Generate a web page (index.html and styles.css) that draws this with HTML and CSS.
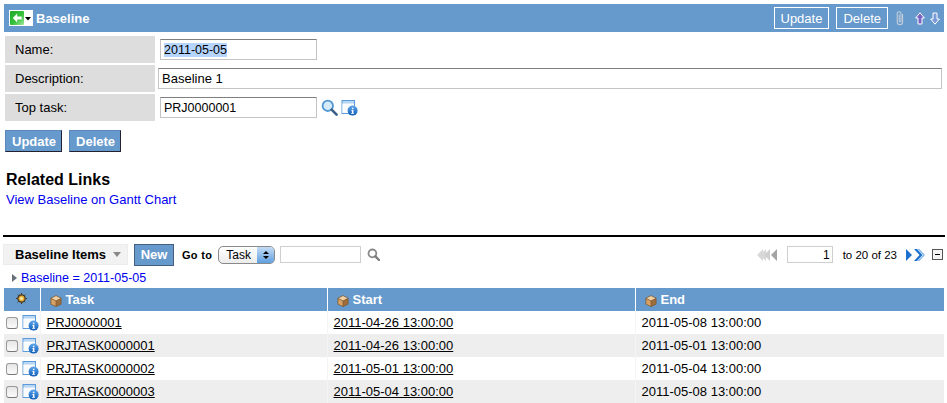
FILE: index.html
```html
<!DOCTYPE html>
<html lang="en">
<head>
  <meta charset="UTF-8">
  <title>Baseline</title>
  <link rel="stylesheet" href="styles.css">
</head>
<body>

<svg class="defs" width="0" height="0">
  <defs>
    <linearGradient id="infoBlue" x1="0" y1="0" x2="0" y2="1">
      <stop offset="0" stop-color="#5fa6ea"/>
      <stop offset="1" stop-color="#0f5cb8"/>
    </linearGradient>
    <linearGradient id="backGreen" x1="0" y1="0" x2="1" y2="1">
      <stop offset="0" stop-color="#1fa52a"/>
      <stop offset="0.55" stop-color="#35c23c"/>
      <stop offset="1" stop-color="#a5e8a0"/>
    </linearGradient>
    <symbol id="info" viewBox="0 0 17 17">
      <path d="M0.500 1h13.500v7h-1v-3.500h-11.500v9.500h6.500v1h-7.500z" fill="#5b9bdc"/>
      <path d="M1.500 2h11.500v2.500h-11.500z" fill="#b9d6f2"/>
      <rect x="1.500" y="4.500" width="11.500" height="9.500" fill="#fafcfe"/>
      <circle cx="11.600" cy="11.600" r="5" fill="url(#infoBlue)"/>
      <path d="M10.900 8.800h1.500v1.400h-1.500zM10.300 11h2.100v3h.7v.8h-3v-.8h.8v-2.200h-.6z" fill="#fff"/>
    </symbol>
    <symbol id="cube" viewBox="0 0 12 12">
      <path d="M6 0.200l5.500 2.700v6.300l-5.500 2.700-5.500-2.700v-6.300z" fill="#7c5a34"/>
      <path d="M6 1l4.500 2.200-4.500 2.300-4.500-2.300z" fill="#f0cfa4"/>
      <path d="M1.300 3.900l4.300 2.200v5l-4.300-2.200z" fill="#d9a264"/>
      <path d="M6.400 6.100l4.300-2.200v5l-4.300 2.200z" fill="#a06c38"/>
    </symbol>
    <symbol id="lens" viewBox="0 0 17 17">
      <circle cx="6.800" cy="6.800" r="5.200" fill="#d6ebfa" stroke="#4f97d4" stroke-width="1.800"/>
      <path d="M10.600 10.600l5 5" stroke="#3b5f86" stroke-width="2.600" stroke-linecap="round"/>
    </symbol>
  </defs>
</svg>

<div class="page">
  <header class="titlebar">
    <div class="titlebar-left">
      <span class="back-menu">
        <svg width="14" height="14" viewBox="0 0 14 14"><rect width="14" height="14" rx="1" fill="url(#backGreen)"/><path d="M7.200 2.600L2.800 7l4.400 4.400V8.600h4.400V5.400H7.200z" fill="#fff"/></svg>
        <svg width="8" height="14" viewBox="0 0 8 14"><path d="M1 6h6L4 9.500z" fill="#000"/></svg>
      </span>
      <h1>Baseline</h1>
    </div>
    <div class="titlebar-right">
      <button class="btn-outline">Update</button>
      <button class="btn-outline">Delete</button>
      <svg class="clip" width="10" height="16" viewBox="0 0 10 16"><path d="M7.600 4v8a2.700 2.700 0 0 1-5.400 0V3.600a1.900 1.900 0 0 1 3.800 0V11a.9.9 0 0 1-1.800 0V4.500" fill="none" stroke="#c3cedb" stroke-width="1.100"/></svg>
      <svg class="arrow-up" width="10" height="13" viewBox="0 0 10 13"><path d="M5 .8L9.400 6H7v6H3V6H.6z" fill="#7a62c4" stroke="#fff"/></svg>
      <svg width="10" height="13" viewBox="0 0 10 13"><path d="M5 12.200L9.400 7H7V1H3v6H.6z" fill="#7a9bd8" stroke="#fff"/></svg>
    </div>
  </header>

  <form class="form">
    <label class="form-label">Name:</label>
    <div class="form-value"><input class="input input-short" id="nameField" value="2011-05-05"></div>
    <label class="form-label">Description:</label>
    <div class="form-value form-value-wide"><input class="input input-full" value="Baseline 1"></div>
    <label class="form-label">Top task:</label>
    <div class="form-value">
      <input class="input input-short" value="PRJ0000001">
      <svg class="icon-lens" width="17" height="17"><use href="#lens"/></svg>
      <svg class="icon-info" width="17" height="17"><use href="#info"/></svg>
    </div>
  </form>

  <div class="actions">
    <button class="btn">Update</button>
    <button class="btn">Delete</button>
  </div>

  <section class="related">
    <h2>Related Links</h2>
    <a href="#">View Baseline on Gantt Chart</a>
  </section>

  <div class="list-rule"></div>

  <div class="toolbar">
    <div class="toolbar-left">
      <span class="list-title">Baseline Items <i class="caret"></i></span>
      <button class="btn btn-new">New</button>
      <span class="goto-label">Go to</span>
      <span class="select">Task<span class="select-knob"><i class="knob-up"></i><i class="knob-down"></i></span></span>
      <input class="input-plain input-search">
      <svg class="search-grey" width="13" height="13" viewBox="0 0 13 13"><circle cx="5.400" cy="5.400" r="3.900" fill="none" stroke="#8a8a8a" stroke-width="1.800"/><path d="M8.400 8.400l3.600 3.600" stroke="#7a7a7a" stroke-width="2.200" stroke-linecap="round"/></svg>
    </div>
    <div class="toolbar-right">
      <svg width="21" height="12" viewBox="0 0 21 12"><path d="M6 0v12L0 6zM9 0v12L3 6z" fill="#d8d8d8"/><path d="M13 0v12L7 6z" fill="#d0d0d0"/><path d="M20 0v12l-6-6z" fill="#a4a4a4"/></svg>
      <input class="input-plain input-page" value="1">
      <span class="page-count">to 20 of 23</span>
      <svg width="21" height="12" viewBox="0 0 21 12"><path d="M1 0v12l6-6z" fill="#1d6fd0"/><path d="M9 0l5.500 6-5.500 6h3l5.500-6-5.500-6z" fill="#1d6fd0"/><path d="M12.500 0l5.500 6-5.500 6h2l5.500-6-5.500-6z" fill="#8dbcee"/></svg>
      <span class="collapse"></span>
    </div>
  </div>

  <div class="filter"><i class="filter-arrow"></i><a href="#">Baseline = 2011-05-05</a></div>

  <table class="items">
    <thead>
      <tr>
        <th class="col-tools">
          <svg width="11" height="11" viewBox="0 0 11 11"><circle cx="5.500" cy="5.500" r="3.600" fill="#e8b13a" stroke="#4a3618" stroke-width="1.200"/><circle cx="5.500" cy="5.500" r="1.300" fill="#fff2c0"/><path d="M5.500 0v11M0 5.500h11M1.600 1.600l7.800 7.800M9.400 1.600l-7.800 7.800" stroke="#4a3618" stroke-width="1" stroke-dasharray="1.600 7.800"/></svg>
        </th>
        <th class="col-task"><svg width="12" height="12"><use href="#cube"/></svg>Task</th>
        <th class="col-date"><svg width="12" height="12"><use href="#cube"/></svg>Start</th>
        <th><svg width="12" height="12"><use href="#cube"/></svg>End</th>
      </tr>
    </thead>
    <tbody>
      <tr>
        <td class="cell-tools"><input type="checkbox" class="check"><svg width="17" height="17"><use href="#info"/></svg></td>
        <td><a href="#">PRJ0000001</a></td>
        <td><a href="#">2011-04-26 13:00:00</a></td>
        <td>2011-05-08 13:00:00</td>
      </tr>
      <tr>
        <td class="cell-tools"><input type="checkbox" class="check"><svg width="17" height="17"><use href="#info"/></svg></td>
        <td><a href="#">PRJTASK0000001</a></td>
        <td><a href="#">2011-04-26 13:00:00</a></td>
        <td>2011-05-01 13:00:00</td>
      </tr>
      <tr>
        <td class="cell-tools"><input type="checkbox" class="check"><svg width="17" height="17"><use href="#info"/></svg></td>
        <td><a href="#">PRJTASK0000002</a></td>
        <td><a href="#">2011-05-01 13:00:00</a></td>
        <td>2011-05-04 13:00:00</td>
      </tr>
      <tr>
        <td class="cell-tools"><input type="checkbox" class="check"><svg width="17" height="17"><use href="#info"/></svg></td>
        <td><a href="#">PRJTASK0000003</a></td>
        <td><a href="#">2011-05-04 13:00:00</a></td>
        <td>2011-05-08 13:00:00</td>
      </tr>
    </tbody>
  </table>
</div>

<script>
document.getElementById('nameField').select();
</script>

</body>
</html>
```

FILE: styles.css
```css
html, body {
  margin: 0;
  padding: 0;
  background: #fff;
  overflow: hidden;
}
body {
  font-family: "Liberation Sans", Arial, sans-serif;
  font-size: 13px;
  color: #000;
}
.defs {
  position: absolute;
}
svg {
  display: block;
  flex: none;
}
.page {
  padding: 4px 3px 0 4px;
}

/* title bar */
.titlebar {
  height: 28px;
  background: #6699cc;
  display: flex;
  align-items: center;
  justify-content: space-between;
  color: #fff;
}
.titlebar-left {
  display: flex;
  align-items: center;
}
.back-menu {
  display: flex;
  background: #fff;
  margin-left: 5px;
  padding: 1px 0 1px 1px;
  width: 24px;
  box-sizing: border-box;
}
h1 {
  margin: 0 0 0 3px;
  font-size: 13px;
  font-weight: bold;
}
.titlebar-right {
  display: flex;
  align-items: center;
}
.btn-outline {
  height: 22px;
  box-sizing: border-box;
  padding: 0 6px;
  margin: 0 7px 0 0;
  border: 1px solid #fff;
  background: transparent;
  color: #fff;
  font: 13px "Liberation Sans", Arial, sans-serif;
}
.clip {
  margin: 0 10px 0 0;
}
.arrow-up {
  margin-right: 5px;
}
.titlebar-right svg:last-child {
  margin-right: 4px;
}

/* form */
.form {
  display: grid;
  grid-template-columns: 150px 1fr;
  row-gap: 2px;
  margin: 4px 0 0 1px;
}
.form-label {
  height: 27px;
  background: #dddddd;
  padding-left: 10px;
  line-height: 27px;
  box-sizing: border-box;
}
.form-value {
  display: flex;
  align-items: center;
  padding-left: 5px;
}
.form-value-wide {
  padding-left: 3px;
}
.input {
  height: 21px;
  box-sizing: border-box;
  border: 1px solid #c4c4c4;
  border-top: 1px solid #7f7f7f;
  padding: 0 3px;
  margin: 0;
  font: 13px "Liberation Sans", Arial, sans-serif;
  color: #000;
  outline: none;
}
.input::selection {
  background: #b5d5ff;
  color: #000;
}
.input-short {
  width: 157px;
  font-size: 12.5px;
}
.input-full {
  width: 784px;
}
.icon-lens {
  margin-left: 4px;
}
.icon-info {
  margin-left: 3px;
}

/* buttons */
.actions {
  display: flex;
  gap: 7px;
  margin: 9px 0 0 1px;
}
.btn {
  height: 22px;
  box-sizing: border-box;
  padding: 0 5px 0 6px;
  margin: 0;
  background: #6699cc;
  border: 1px solid #5a87b5;
  border-right-color: #223;
  border-bottom-color: #223;
  color: #fff;
  font: bold 13px "Liberation Sans", Arial, sans-serif;
}

/* related links */
.related {
  margin: 19px 0 0 2px;
}
h2 {
  margin: 0;
  font-size: 16px;
  font-weight: bold;
  line-height: 18px;
}
.related a {
  display: block;
  margin-top: 3px;
  line-height: 16px;
  color: #0000ee;
  text-decoration: none;
}

/* list header */
.list-rule {
  height: 2px;
  background: #000;
  margin: 27px -1px 0 -1px;
}
.toolbar {
  display: flex;
  justify-content: space-between;
  align-items: center;
  margin: 7px -1px 0 -1px;
  height: 21px;
}
.toolbar-left, .toolbar-right {
  display: flex;
  align-items: center;
}
.list-title {
  display: flex;
  align-items: center;
  height: 21px;
  width: 125px;
  box-sizing: border-box;
  padding-left: 11px;
  background: #f2f2f2;
  border: 1px solid #ececec;
  font-weight: bold;
}
.caret {
  width: 0;
  height: 0;
  border: 4px solid transparent;
  border-top: 5px solid #888;
  border-bottom: 0;
  margin-left: 7px;
}
.btn-new {
  height: 22px;
  width: 40px;
  padding: 0;
  margin-left: 6px;
  border: 1px solid #445f80;
}
.goto-label {
  font-size: 11px;
  font-weight: bold;
  margin-left: 8px;
  letter-spacing: 0.3px;
}
.select {
  display: flex;
  align-items: center;
  justify-content: space-between;
  width: 57px;
  height: 18px;
  box-sizing: border-box;
  margin-left: 6px;
  padding-left: 7px;
  border: 1px solid #8a8a8a;
  border-radius: 5px;
  background: linear-gradient(#fff, #ececec);
  font-size: 12px;
  overflow: hidden;
}
.select-knob {
  width: 17px;
  height: 16px;
  background: linear-gradient(#c4dcf5, #5f9fe0);
  display: flex;
  flex-direction: column;
  align-items: center;
  justify-content: center;
  gap: 2px;
}
.knob-up, .knob-down {
  width: 0;
  height: 0;
  border: 3px solid transparent;
  border-top: 0;
  border-bottom: 3px solid #000;
}
.knob-down {
  border-bottom: 0;
  border-top: 3px solid #000;
}
.input-plain {
  box-sizing: border-box;
  height: 17px;
  border: 1px solid #cfcfcf;
  padding: 0 2px;
  margin: 0;
  font: 12px "Liberation Sans", Arial, sans-serif;
  outline: none;
}
.input-search {
  width: 81px;
  margin-left: 5px;
}
.search-grey {
  margin-left: 6px;
}
.toolbar-right {
  padding-right: 2px;
}
.input-page {
  width: 46px;
  margin-left: 9px;
  text-align: right;
}
.page-count {
  font-size: 11.5px;
  margin: 0 8px 0 10px;
}
.collapse {
  width: 11px;
  height: 11px;
  box-sizing: border-box;
  border: 1px solid #555;
  background: linear-gradient(#000, #000) center / 5px 1px no-repeat #f4f4f4;
  margin-left: 6px;
}

/* filter */
.filter {
  display: flex;
  align-items: center;
  height: 16px;
  margin: 5px 0 0 8px;
  font-size: 12.5px;
}
.filter a {
  color: #0000ee;
  text-decoration: none;
}
.filter-arrow {
  width: 0;
  height: 0;
  border: 4px solid transparent;
  border-left: 5px solid #66707a;
  border-right: 0;
  margin-right: 4px;
}

/* table */
.items {
  width: 940px;
  table-layout: fixed;
  border-collapse: collapse;
  margin-top: 2px;
}
.items th {
  height: 23px;
  box-sizing: border-box;
  padding: 0 0 0 9px;
  background: #6699cc;
  color: #fff;
  font-size: 13px;
  font-weight: bold;
  text-align: left;
  border-left: 1px solid #fff;
}
.items th:first-child {
  border-left: 0;
}
.items th svg {
  display: inline-block;
  vertical-align: -3px;
  margin-right: 4px;
}
.items th.col-tools {
  width: 36px;
  padding: 0 0 0 12px;
}
.items th.col-tools svg {
  margin: 0;
  vertical-align: 0;
}
.col-task {
  width: 287px;
}
.col-date {
  width: 308px;
}
.items td {
  height: 23px;
  padding: 0 0 0 6px;
  box-sizing: border-box;
  border-left: 1px solid #f4f4f4;
}
.items td:first-child {
  border-left: 0;
  padding: 0;
}
.items tbody tr:nth-child(even) {
  background: #eeeeee;
}
.items a {
  color: #000;
  text-decoration: underline;
}
.cell-tools {
  white-space: nowrap;
}
.cell-tools svg {
  display: inline-block;
  vertical-align: middle;
  margin-left: 4px;
}
.check {
  appearance: none;
  display: inline-block;
  vertical-align: middle;
  width: 12px;
  height: 12px;
  margin: 0 0 0 2px;
  border: 1px solid #999;
  border-bottom-color: #777;
  border-radius: 3px;
  background: linear-gradient(#e6e6e6, #fbfbfb);
}
```
